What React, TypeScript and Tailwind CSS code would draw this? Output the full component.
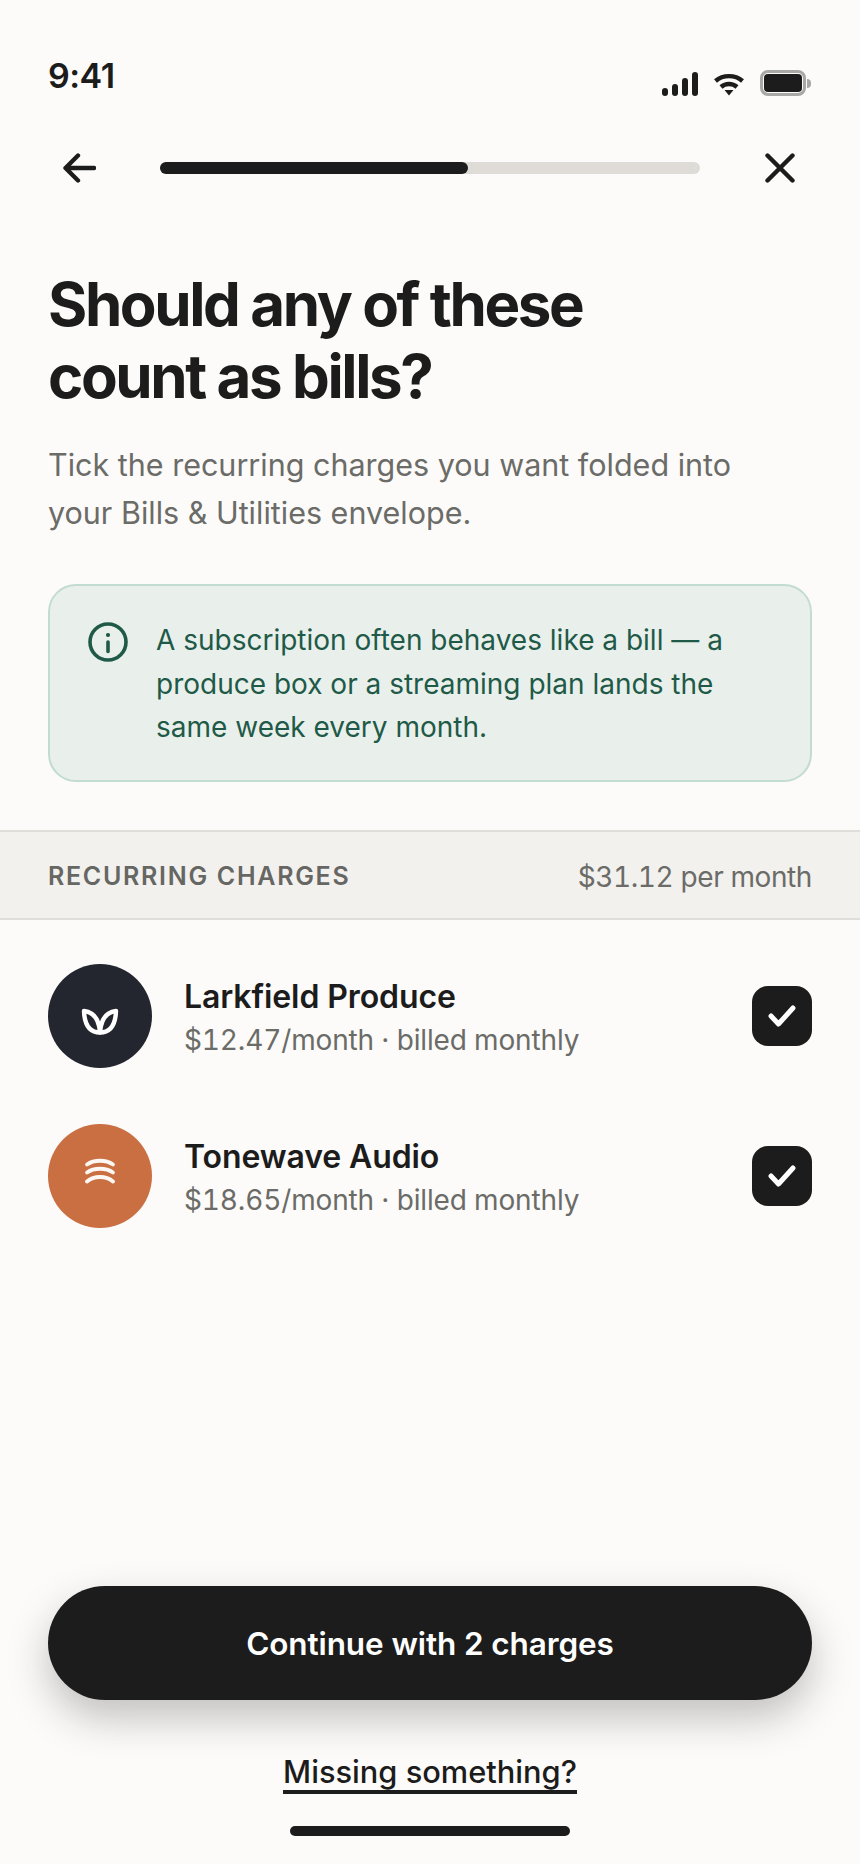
import React from "react";

const charges = [
  { name: "Larkfield Produce", price: "$12.47/month · billed monthly", color: "bg-[#24262f]", icon: "leaf" },
  { name: "Tonewave Audio", price: "$18.65/month · billed monthly", color: "bg-[#c96f42]", icon: "wave" },
];

function LeafIcon() {
  return (
    <svg className="mt-[10px]" width="38" height="27" viewBox="0 0 38 27" fill="none" stroke="#fff" strokeWidth="4.4" strokeLinejoin="round" strokeLinecap="round">
      <path d="M19 24.5C9 24.5 3.5 17 3 3C11 4 18 9 19 24.5Z" />
      <path d="M19 24.5C29 24.5 34.5 17 35 3C27 4 20 9 19 24.5Z" />
    </svg>
  );
}

function WaveIcon() {
  return (
    <svg className="mb-[10px]" width="32" height="26" viewBox="0 0 32 26" fill="none" stroke="#fdf8f3" strokeWidth="3.8" strokeLinecap="round">
      <path d="M3 6.5C10 1.5 22 1.5 29 6.5" />
      <path d="M3 14.5C10 9.5 22 9.5 29 14.5" />
      <path d="M3 23.5C10 17.5 22 17.5 29 23.5" />
    </svg>
  );
}

function StatusIcons() {
  return (
    <div className="flex items-end gap-[16px]">
      <svg width="36" height="24" viewBox="0 0 36 24" fill="#1c1c1c">
        <rect x="0" y="16" width="6" height="8" rx="3" />
        <rect x="10" y="12" width="6" height="12" rx="3" />
        <rect x="20" y="6" width="6" height="18" rx="3" />
        <rect x="30" y="0" width="6" height="24" rx="3" />
      </svg>
      <svg width="30" height="23" viewBox="0 0 30 23" fill="none" stroke="#1c1c1c" strokeWidth="4.4">
        <path d="M1.5 8C9 1.5 21 1.5 28.5 8" />
        <path d="M7 14C11.5 10 18.5 10 23 14" />
        <path d="M10.5 17H19.5L15 22.5Z" fill="#1c1c1c" stroke="none" />
      </svg>
      <div className="flex items-center">
        <div className="w-[46px] h-[26px] rounded-[8px] border-[3px] border-[#a8a8a6] p-[1px]">
          <div className="w-full h-full rounded-[4px] bg-[#1c1c1c]" />
        </div>
        <div className="w-[4px] h-[9px] rounded-r-[4px] bg-[#a8a8a6] ml-[1px]" />
      </div>
    </div>
  );
}

export default function App() {
  return (
    <div className="w-[860px] h-[1864px] bg-[#fcfbf9] text-[#1c1c1c] flex flex-col font-['Inter',sans-serif] overflow-hidden">
      {/* status bar */}
      <div className="flex justify-between items-end pl-[48px] pr-[49px] pt-[55px] h-[108px]">
        <span className="text-[34px] leading-[42px] font-semibold tracking-[-0.5px] mb-[11px]">9:41</span>
        <div className="mb-[12px]">
          <StatusIcons />
        </div>
      </div>

      {/* nav */}
      <div className="flex items-center h-[60px] mt-[30px] pl-[63px] pr-[64px]">
        <svg width="33" height="30" viewBox="0 0 33 30" fill="none" stroke="#1c1c1c" strokeWidth="4.4" strokeLinecap="round" strokeLinejoin="round">
          <path d="M31 15H3M15 2.5L2.5 15L15 27.5" />
        </svg>
        <div className="ml-[64px] w-[540px] h-[12px] rounded-full bg-[#dfdcd7]">
          <div className="w-[308px] h-full rounded-full bg-[#1c1c1c]" />
        </div>
        <svg className="ml-auto" width="32" height="30" viewBox="0 0 32 30" fill="none" stroke="#1c1c1c" strokeWidth="4.4" strokeLinecap="round">
          <path d="M3.5 2.5L28.5 27.5M28.5 2.5L3.5 27.5" />
        </svg>
      </div>

      {/* heading */}
      <div className="px-[48px] mt-[70px]">
        <h1 className="text-[60px] leading-[72px] font-bold tracking-[-2.4px]">
          Should any of these
          <br />
          count as bills?
        </h1>
        <p className="mt-[29px] text-[30.5px] leading-[48px] text-[#6b6b68]">
          Tick the recurring charges you want folded into
          <br />
          your Bills &amp; Utilities envelope.
        </p>
      </div>

      {/* info box */}
      <div className="mx-[48px] mt-[47px] h-[198px] rounded-[28px] border-2 border-[#c3dcd1] bg-[#e9f0eb] flex pl-[38px] pt-[33px]">
        <svg className="mt-[3px] shrink-0" width="40" height="40" viewBox="0 0 40 40" fill="none" stroke="#1f5a48" strokeWidth="3.6" strokeLinecap="round">
          <circle cx="20" cy="20" r="18" />
          <path d="M20 20V29.5" />
          <circle cx="20" cy="13" r="1.4" fill="#1f5a48" strokeWidth="1.4" />
        </svg>
        <p className="ml-[28px] text-[28px] leading-[43.5px] text-[#1f5a48]">
          A subscription often behaves like a bill — a
          <br />
          produce box or a streaming plan lands the
          <br />
          same week every month.
        </p>
      </div>

      {/* section header */}
      <div className="mt-[48px] h-[90px] pt-[4px] border-y-2 border-[#dfdedb] bg-[#f2f1ee] flex items-center justify-between px-[48px]">
        <span className="text-[25px] font-semibold tracking-[1.7px] text-[#666663]">RECURRING CHARGES</span>
        <span className="text-[28px] tabular-nums tracking-[-0.4px] text-[#6b6b68]">$31.12 per month</span>
      </div>

      {/* rows */}
      <div className="mt-[44px] flex flex-col gap-[56px] px-[48px]">
        {charges.map((c) => (
          <div key={c.name} className="flex items-center h-[104px]">
            <div className={`w-[104px] h-[104px] rounded-full flex items-center justify-center ${c.color}`}>
              {c.icon === "leaf" ? <LeafIcon /> : <WaveIcon />}
            </div>
            <div className="ml-[32px] mt-[5px]">
              <div className="text-[32px] leading-[43px] font-semibold tracking-[-0.1px]">{c.name}</div>
              <div className="text-[28px] leading-[45px] tabular-nums tracking-[-0.15px] text-[#6b6b68]">{c.price}</div>
            </div>
            <div className="ml-auto w-[60px] h-[60px] rounded-[16px] bg-[#1c1c1c] flex items-center justify-center">
              <svg width="28" height="24" viewBox="0 0 28 24" fill="none" stroke="#fff" strokeWidth="5" strokeLinecap="round" strokeLinejoin="round">
                <path d="M3 12L10.5 20L25 4" />
              </svg>
            </div>
          </div>
        ))}
      </div>

      {/* footer */}
      <div className="mt-auto px-[48px] flex flex-col items-center">
        <button className="w-full h-[114px] pt-[2px] rounded-full bg-[#1c1c1c] text-white text-[31.5px] font-semibold tracking-[-0.1px] shadow-[0_18px_40px_rgba(28,28,28,0.26)]">
          Continue with 2 charges
        </button>
        <a className="mt-[54px] text-[30.8px] leading-[36px] font-medium border-b-[4px] border-[#1c1c1c]">Missing something?</a>
        <div className="mt-[32px] mb-[28px] w-[280px] h-[10px] rounded-full bg-[#1c1c1c]" />
      </div>
    </div>
  );
}
